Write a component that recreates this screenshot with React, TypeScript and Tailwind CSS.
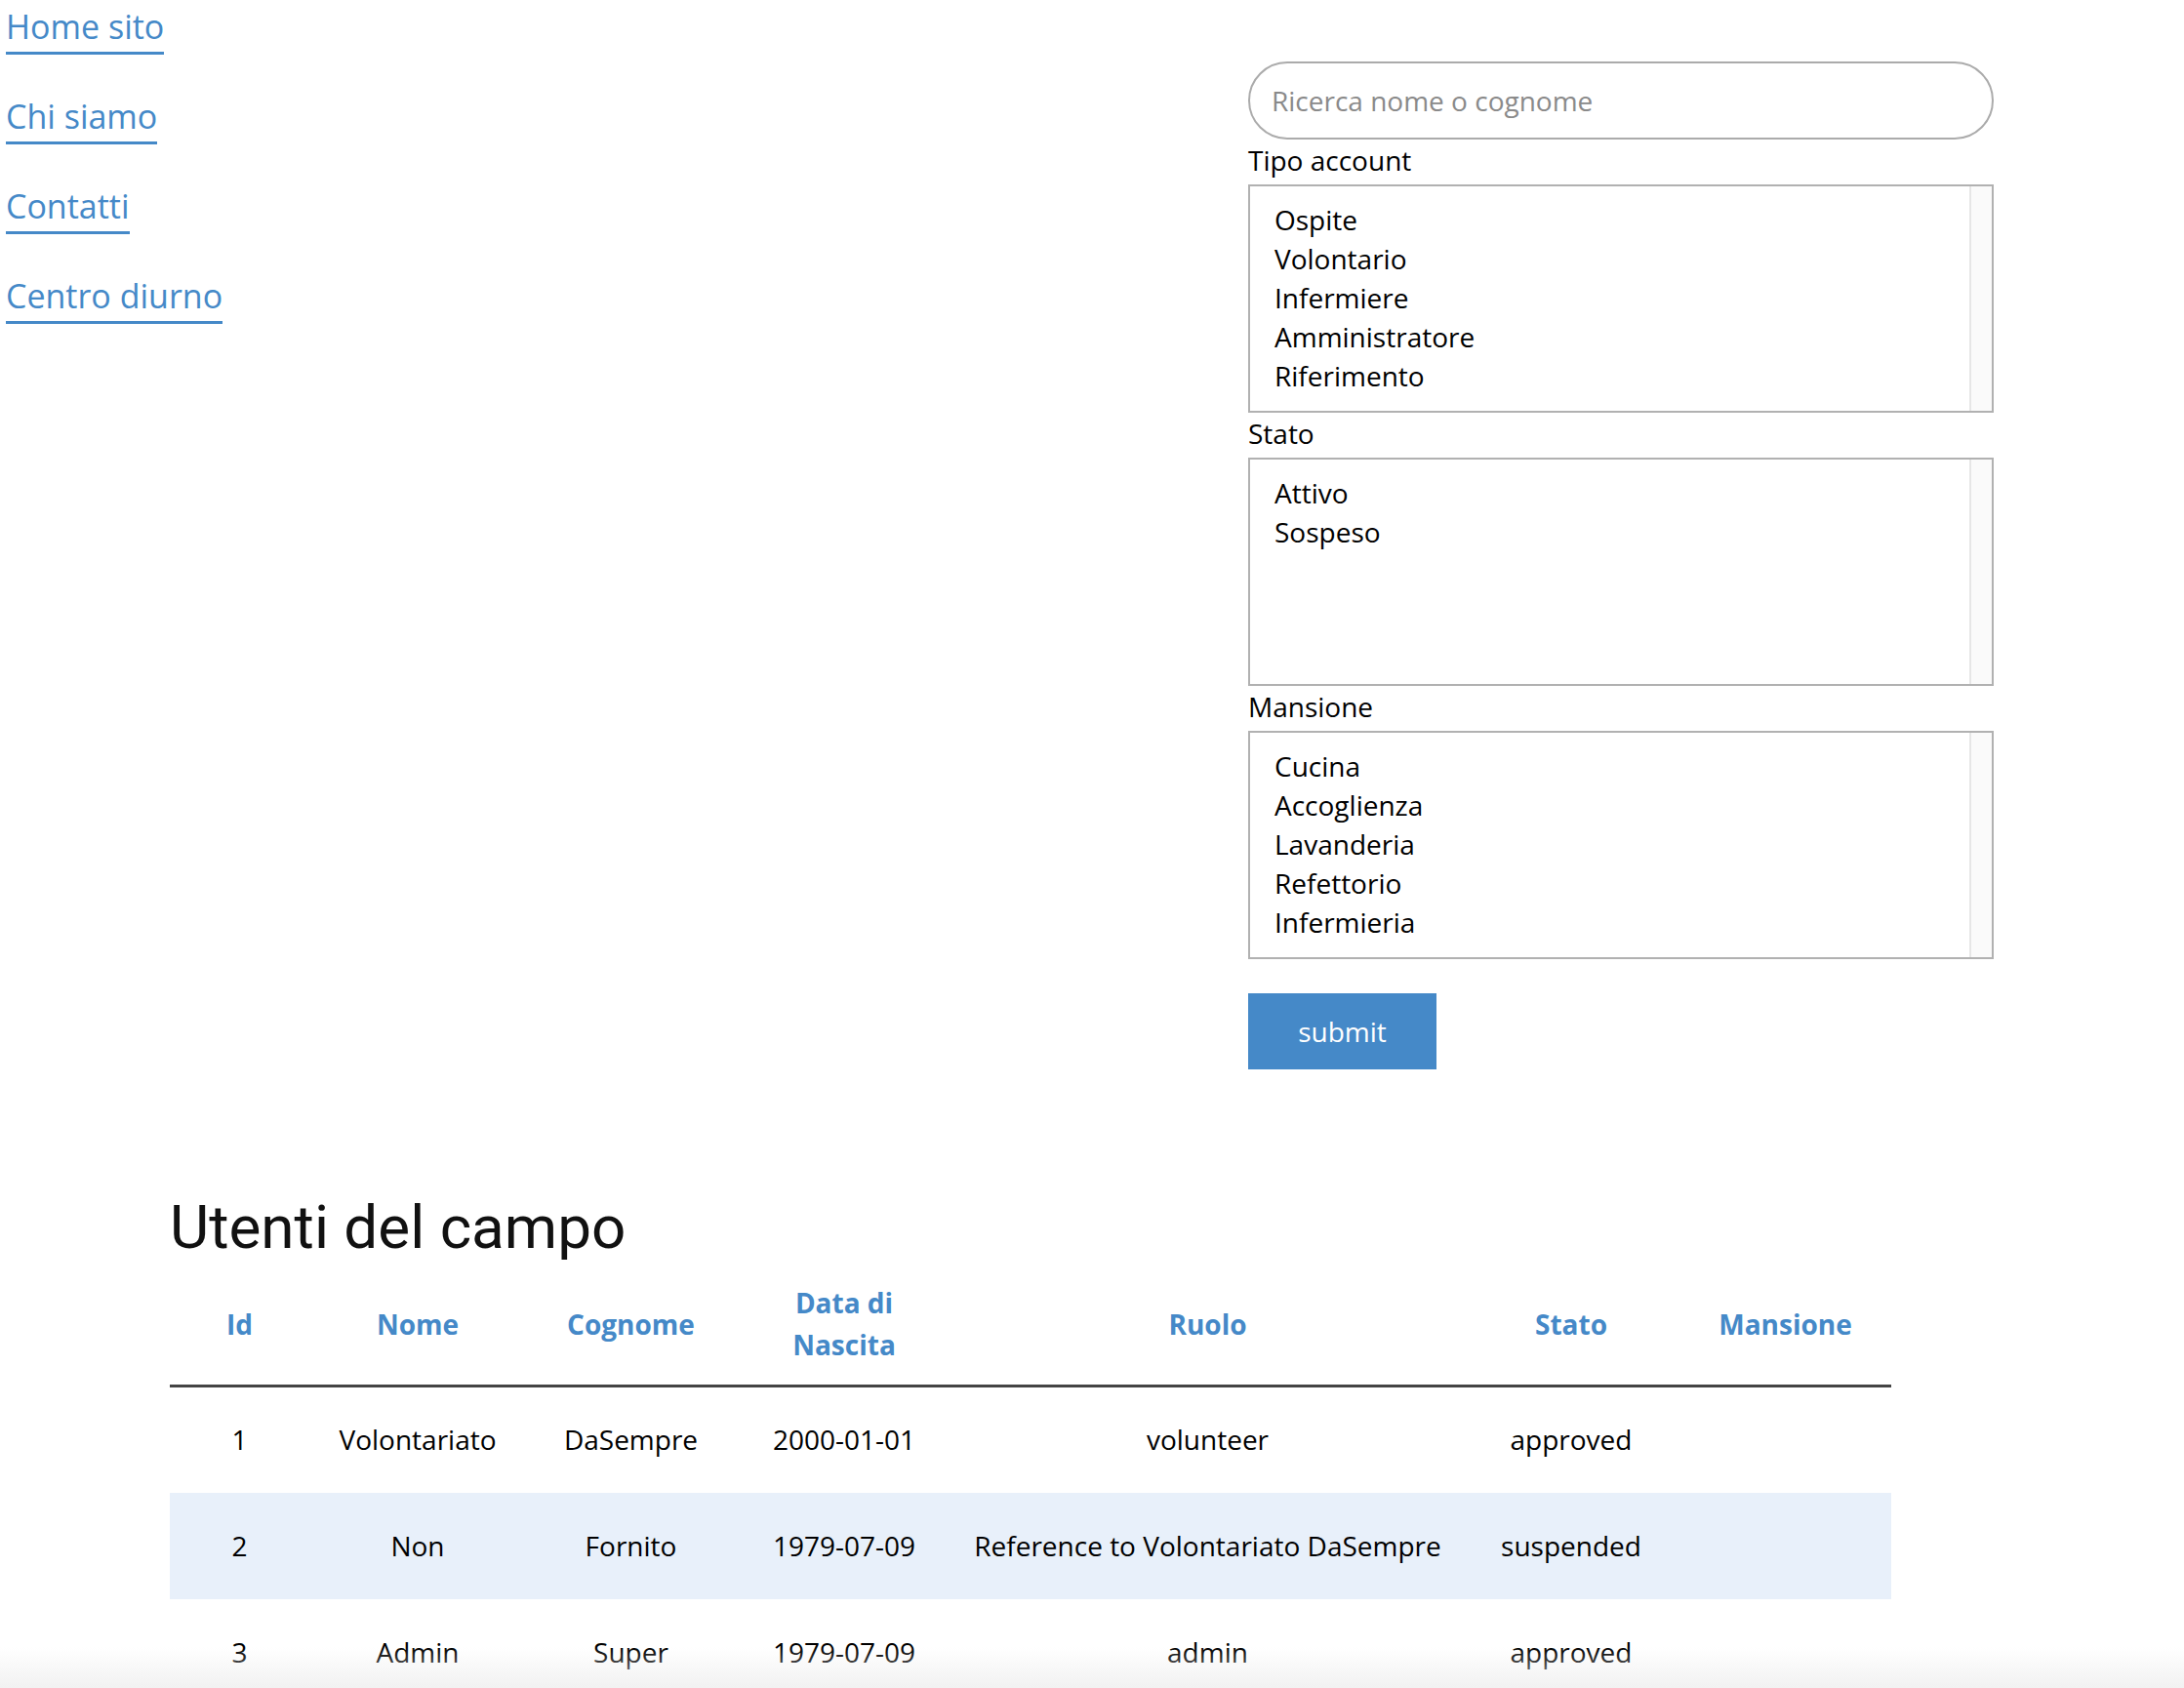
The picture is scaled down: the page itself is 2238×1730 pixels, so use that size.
import React from 'react';

const navLinks = ['Home sito', 'Chi siamo', 'Contatti', 'Centro diurno'];

const filters = [
  { label: 'Tipo account', options: ['Ospite', 'Volontario', 'Infermiere', 'Amministratore', 'Riferimento'] },
  { label: 'Stato', options: ['Attivo', 'Sospeso'] },
  { label: 'Mansione', options: ['Cucina', 'Accoglienza', 'Lavanderia', 'Refettorio', 'Infermieria'] },
];

const columns = [
  { title: 'Id', w: 'w-[143px]' },
  { title: 'Nome', w: 'w-[222px]' },
  { title: 'Cognome', w: 'w-[215px]' },
  { title: 'Data di Nascita', w: 'w-[222px]' },
  { title: 'Ruolo', w: 'w-[523px]' },
  { title: 'Stato', w: 'w-[222px]' },
  { title: 'Mansione', w: 'w-[217px]' },
];

const users = [
  ['1', 'Volontariato', 'DaSempre', '2000-01-01', 'volunteer', 'approved', ''],
  ['2', 'Non', 'Fornito', '1979-07-09', 'Reference to Volontariato DaSempre', 'suspended', ''],
  ['3', 'Admin', 'Super', '1979-07-09', 'admin', 'approved', ''],
];

const ListBox: React.FC<{ options: string[] }> = ({ options }) => (
  <div className="mt-[6px] flex h-[234px] border-2 border-[#b1b1b1] bg-white">
    <ul className="flex-1 pl-[25px] pt-[14px] text-[28px] leading-[40px] text-black">
      {options.map((o) => (
        <li key={o}>{o}</li>
      ))}
    </ul>
    <div className="w-[23px] border-l-2 border-[#e6e6e6] bg-[#fafafa]" />
  </div>
);

const App: React.FC = () => {
  return (
    <div className="relative min-h-[1730px] overflow-hidden bg-white font-['Open_Sans',sans-serif] text-black">
      <div className="flex">
        <nav className="pl-[6px] pt-[3px]">
          {navLinks.map((l) => (
            <a
              key={l}
              href="#"
              className="mb-[39px] block w-fit border-b-[3px] border-[#4589c8] pb-[1px] text-[34px] leading-[49px] text-[#4589c8]"
            >
              {l}
            </a>
          ))}
        </nav>

        <form className="ml-auto mr-[195px] mt-[63px] w-[764px]" onSubmit={(e) => e.preventDefault()}>
          <input
            type="text"
            placeholder="Ricerca nome o cognome"
            className="block h-[80px] w-full rounded-full border-2 border-[#ababab] px-[22px] text-[28px] text-black outline-none placeholder:text-[#8a8a8a]"
          />
          {filters.map((f) => (
            <div key={f.label}>
              <div className="pt-[2px] text-[28px] leading-[38px]">{f.label}</div>
              <ListBox options={f.options} />
            </div>
          ))}
          <button
            type="submit"
            className="mt-[35px] h-[78px] w-[193px] bg-[#4589c8] text-[28px] text-white"
          >
            submit
          </button>
        </form>
      </div>

      <section className="ml-[174px] mt-[126px] w-[1764px]">
        <h1 className="font-['Roboto',sans-serif] text-[62px] leading-[72px] text-[#111]">Utenti del campo</h1>
        <table className="mt-[1px] w-full table-fixed border-collapse text-center text-[28px]">
          <thead>
            <tr className="border-b-[3px] border-[#444]">
              {columns.map((c) => (
                <th
                  key={c.title}
                  className={`${c.w} px-[24px] py-[19px] font-bold leading-[43px] text-[#4589c8]`}
                >
                  {c.title === 'Data di Nascita' ? (
                    <>
                      Data di
                      <br />
                      Nascita
                    </>
                  ) : (
                    c.title
                  )}
                </th>
              ))}
            </tr>
          </thead>
          <tbody>
            {users.map((u, i) => (
              <tr key={u[0]} className={i % 2 === 1 ? 'bg-[#e8f0fa]' : ''}>
                {u.map((cell, j) => (
                  <td key={j} className="h-[109px] whitespace-nowrap px-[8px] leading-[43px]">
                    {cell}
                  </td>
                ))}
              </tr>
            ))}
          </tbody>
        </table>
      </section>

      <div className="pointer-events-none absolute bottom-0 left-0 h-[60px] w-full bg-gradient-to-b from-transparent to-[#ececec]" />
    </div>
  );
};

export default App;
